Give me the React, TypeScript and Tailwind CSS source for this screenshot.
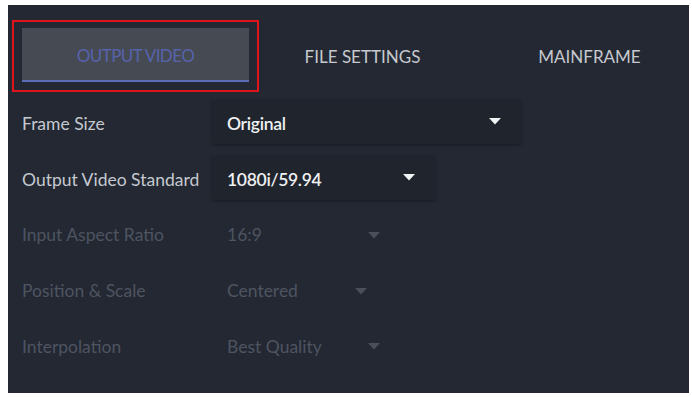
import React, { useState } from 'react';

type Row = {
  label: string;
  value: string;
  width: string;
  disabled?: boolean;
};

const rows: Row[] = [
  { label: 'Frame Size', value: 'Original', width: 'w-[309px]' },
  { label: 'Output Video Standard', value: '1080i/59.94', width: 'w-[223px]' },
  { label: 'Input Aspect Ratio', value: '16:9', width: 'w-[188px]', disabled: true },
  { label: 'Position & Scale', value: 'Centered', width: 'w-[175px]', disabled: true },
  { label: 'Interpolation', value: 'Best Quality', width: 'w-[188px]', disabled: true },
];

const tabs = ['OUTPUT VIDEO', 'FILE SETTINGS', 'MAINFRAME'];

const Caret = ({ disabled }: { disabled?: boolean }) => (
  <svg width="12" height="7" viewBox="0 0 12 7" className="shrink-0">
    <path d="M0 0 H12 L6 6.5 Z" fill={disabled ? '#4a505b' : '#f2f3f5'} />
  </svg>
);

const App = () => {
  const [active, setActive] = useState(0);

  return (
    <div className="w-[692px] h-[397px] bg-white pt-[5px] pl-[8px]">
      <div
        className="w-[681px] h-[388px] bg-[#232833] overflow-hidden"
        style={{ fontFamily: 'Lato, "Noto Sans", sans-serif' }}
      >
        {/* tab bar */}
        <div className="relative flex pl-[14px] pt-[23px] h-[91px]">
          {tabs.map((t, i) => (
            <button
              key={t}
              onClick={() => setActive(i)}
              className={`w-[227px] shrink-0 h-[54px] flex items-center justify-center pt-[3px] text-[17px] ${
                i === active
                  ? 'bg-[#454a53] text-[#5863ad] border-b-2 border-[#5b6cb8]'
                  : 'text-[#c6c9ce]'
              }`}
            >
              <span className={i === active ? 'tracking-[-0.6px]' : ''}>{t}</span>
            </button>
          ))}
          <div className="absolute left-[4px] top-[15px] w-[247px] h-[72px] border-2 border-[#e0141b] pointer-events-none" />
        </div>

        {/* settings */}
        <div className="flex flex-col pl-[14px]">
          {rows.map((r) => (
            <div key={r.label} className="flex items-center h-[55.75px]">
              <div
                className={`w-[190px] shrink-0 text-[17.5px] ${
                  r.disabled ? 'text-[#4e5460]' : 'text-[#c5c9cf]'
                }`}
              >
                {r.label}
              </div>
              <div
                className={`${r.width} h-[44px] flex items-center justify-between pl-[15px] pr-[20px] ${
                  r.disabled ? '' : 'bg-[#20242d] shadow-[0_1px_3px_rgba(0,0,0,0.35)] -translate-y-[2px]'
                }`}
              >
                <span
                  className={`text-[17.5px] ${
                    r.disabled ? 'text-[#4e5460]' : 'text-[#eef0f2] font-semibold translate-y-[2px] tracking-[-0.3px]'
                  }`}
                >
                  {r.value}
                </span>
                <Caret disabled={r.disabled} />
              </div>
            </div>
          ))}
        </div>
      </div>
    </div>
  );
};

export default App;
